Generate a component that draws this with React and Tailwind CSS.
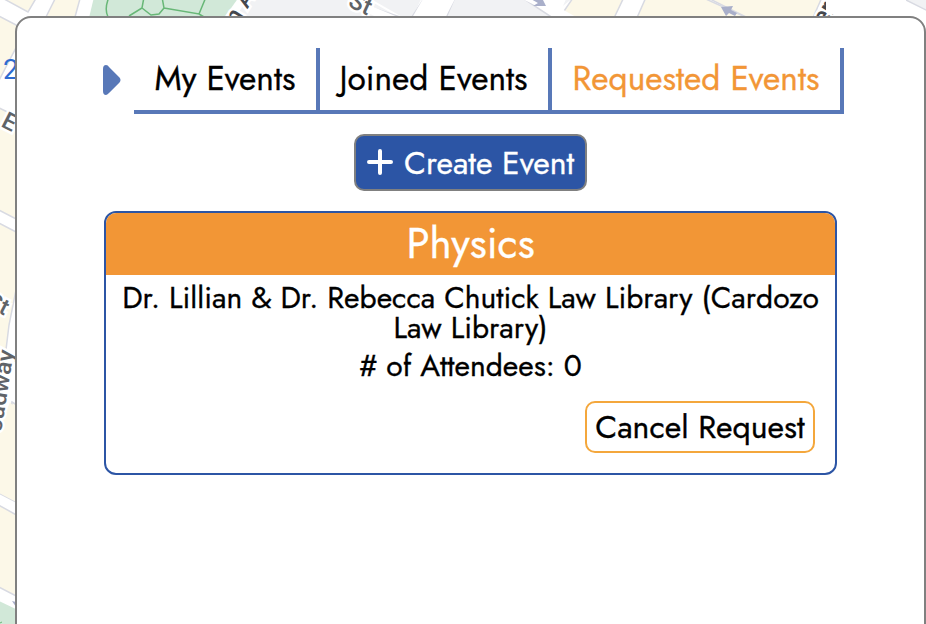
function MapBackdrop() {
  return (
    <svg className="absolute inset-0" width="926" height="624" viewBox="0 0 926 624" fontFamily="Roboto, sans-serif">
      <rect width="926" height="624" fill="#fff" />
      {/* city blocks */}
      <g fill="#fcf8e8" stroke="#d8dae2" strokeWidth="1.5">
        <path d="M-5 -5H38L28 12L-5 -6Z" />
        <path d="M-5 14L20 27V40L-5 88Z" />
        <path d="M68 -5H81L75 17H46L57 -5Z" />
        <path d="M-5 106L20 118V221L-5 208Z" />
        <path d="M-5 221L20 234V270L9 325L-5 440Z" />
        <path d="M12 402L20 407V504L-5 491Z" />
        <path d="M-5 503L20 517V598L-5 585Z" />
        <path d="M-5 440L10 402L20 415V504L-5 491Z" stroke="none" />
        <path d="M647 -5H697L752 20H636Z" />
        <path d="M575 -5H625L614 18H577L562 14Z" />
        <path d="M702 -5H823L812 20H752Z" />
      </g>
      <g fill="#f1f2f4" stroke="#d8dae2" strokeWidth="1.5">
        <path d="M250 -5H360L400 18H235Z" stroke="none" />
        <path d="M456 -5H518L553 18H446Z" />
        <path d="M906 -5H930V12L906 0Z" />
      </g>
      <path d="M364 -5L404 18H412L423 -5Z" fill="#f1f2f4" />
      <path d="M364 5L400 17M423 0L412 17" stroke="#d8dae2" strokeWidth="1.5" fill="none" />
      <path d="M424 -3L412 18H445L456 -3Z" fill="#fff" />
      <path d="M364 3L405 20H382L354 6Z" fill="#fff" />
      <path d="M518 -3L562 18H578L540 -3Z" fill="#fff" />
      <path d="M567 -3H574L563 6Z" fill="#f1f2f4" />
      {/* park and its paths */}
      <path d="M94 -3H239L224 18H89Z" fill="#d1e8d8" />
      <path d="M109 -3Q104 9 108 17M144 -3L142 8L129 16M142 8L151 15L159 14L164 8L162 -3M164 8L199 14L206 -3M199 14L204 17" fill="none" stroke="#68b777" strokeWidth="1.5" />
      <path d="M-5 599L20 611V630H-5Z" fill="#d1e8d8" />
      {/* one-way arrows */}
      <g fill="#a9afca">
        <path d="M533 0L542 -2L546 6L533 6L538 3L529 -2Z" />
        <path d="M721 7L733 6L731 10L737 13L735 16L729 13L726 16Z" />
        <path d="M12 601L16 602V607Z" />
      </g>
      <path d="M0 623L2 622" stroke="#68b777" />
      {/* street labels */}
      <g fill="#5f6368" stroke="#fff" strokeWidth="5" paintOrder="stroke" fontWeight="500">
        <text transform="translate(237 26) rotate(-58)" fontSize="24" fill="#45484e">n A</text>
        <text transform="translate(347 6) rotate(25)" fontSize="24">St</text>
        <text transform="translate(825 27) rotate(-58)" fontSize="25" fill="#45484e">er</text>
        <text transform="translate(0 126) rotate(27)" fontSize="24">E</text>
        <text transform="translate(-15 306) rotate(27)" fontSize="23">St</text>
        <text transform="translate(1 433) rotate(-81)" fontSize="23">
          <tspan textLength="83" lengthAdjust="spacingAndGlyphs">oadway</tspan>
        </text>
      </g>
      <text x="3" y="79" fontSize="28" fill="#2e6bd0">2</text>
      <rect x="826" y="-8" width="80" height="22" rx="3" fill="#fff" />
    </svg>
  );
}

function Tab({ children, className }) {
  return (
    <div className={`flex h-[62px] items-center justify-center border-r-4 border-[#5878b8] whitespace-nowrap ${className}`}>
      {children}
    </div>
  );
}

export default function App() {
  return (
    <div className="relative h-[624px] w-[926px] overflow-hidden bg-white font-['Jost','Lato',sans-serif] text-black [-webkit-text-stroke:0.3px]">
      <MapBackdrop />
      <main className="relative mt-4 ml-[15px] flex h-[640px] w-[911px] flex-col items-center rounded-2xl border-2 border-[#808080] bg-white pt-[30px]">
        <div className="ml-[86px] flex w-[741px] items-start self-start">
          <svg className="mt-[17px] mr-[13px] shrink-0" width="18" height="30" viewBox="0 0 18 30">
            <path d="M0 4Q0 0 3 0Q5 0 6 2L16.5 12.5Q18.500 15 16.500 17.500L6 28Q4 30 3 30Q0 30 0 26Z" fill="#5878b8" />
          </svg>
          <nav className="flex h-[66px] w-[710px] shrink-0 border-b-4 border-[#5878b8] text-[33.5px] leading-none">
            <Tab className="w-[186px] pb-px">My Events</Tab>
            <Tab className="w-[232px] pr-px pb-px">Joined Events</Tab>
            <Tab className="w-[292px] pb-px text-[#f29636]">Requested Events</Tab>
          </nav>
        </div>

        <button className="mt-5 flex h-[57px] w-[233px] shrink-0 items-center rounded-[10px] border-2 border-[#808080] bg-[#2c55a5] pl-[11px] text-[32px] leading-none whitespace-nowrap text-white">
          <svg className="mr-[11px] mb-0.5 shrink-0" width="26" height="26" viewBox="0 0 26 26" stroke="white" strokeWidth="4" strokeLinecap="round">
            <path d="M13 2V24M2 13H24" />
          </svg>
          <span>Create Event</span>
        </button>

        <section className="mt-5 flex h-[264px] w-[733px] shrink-0 flex-col overflow-hidden rounded-xl border-2 border-[#2c55a5] text-center">
          <h2 className="flex h-[62px] shrink-0 items-center justify-center bg-[#f29636] text-[42px] leading-none text-white">
            <span>Physics</span>
          </h2>
          <p className="mt-2 px-3 text-[30px] leading-[30px]">
            Dr. Lillian &amp; Dr. Rebecca Chutick Law Library (Cardozo Law Library)
          </p>
          <p className="mt-2 text-[30px] leading-[30px]"># of Attendees: 0</p>
          <button className="mt-5 mr-5 flex h-[52px] w-[230px] shrink-0 items-center justify-center self-end rounded-[10px] border-2 border-[#f4a73c] text-[32px] leading-none whitespace-nowrap">
            Cancel Request
          </button>
        </section>
      </main>
    </div>
  );
}
